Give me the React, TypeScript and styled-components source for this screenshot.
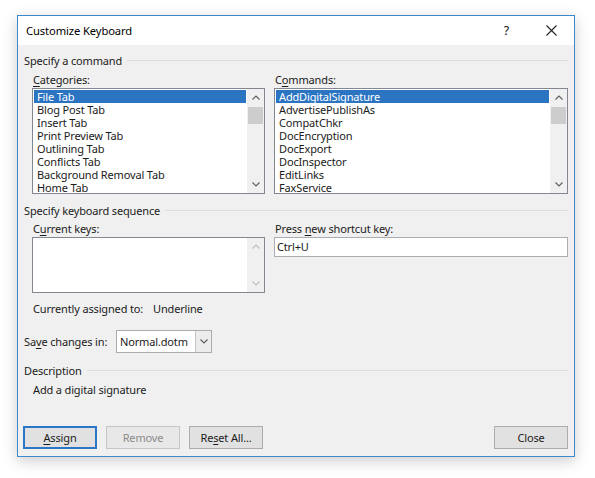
import React from "react";
import styled, { createGlobalStyle } from "styled-components";

const FONT = `"Noto Sans", "Open Sans", sans-serif`;

const Global = createGlobalStyle`
  html, body { margin: 0; padding: 0; background: #ffffff; }
  body { font-family: ${FONT}; font-size: 11px; letter-spacing: -0.15px; color: #1b1b1b; }
  * { box-sizing: border-box; }
`;

const Stage = styled.div`
  padding: 15px 0 0 17px;
  width: 595px;
  height: 478px;
`;

const Window = styled.div`
  width: 558px;
  height: 442px;
  border: 1px solid #3e88cc;
  background: #f0f0f0;
  display: flex;
  flex-direction: column;
  box-shadow: 0 4px 14px rgba(0, 0, 0, 0.2);
`;

const TitleBar = styled.div`
  height: 29px;
  background: #ffffff;
  display: flex;
  align-items: center;
  padding-left: 8px;
`;

const Title = styled.div`
  flex: 1;
  font-size: 11.2px;
  letter-spacing: -0.1px;
  color: #000;
  padding-bottom: 1px;
`;

const TitleButton = styled.div`
  width: 45px;
  height: 29px;
  display: flex;
  align-items: center;
  justify-content: center;
  font-size: 12.5px;
  color: #111;
`;

const Content = styled.div`
  flex: 1;
  display: flex;
  flex-direction: column;
  padding: 0 6px 7px 6px;
`;

const SectionHeader = styled.div<{ $top: number }>`
  display: flex;
  align-items: center;
  gap: 5px;
  height: 16px;
  margin-top: ${(p) => p.$top}px;
  &::after {
    content: "";
    flex: 1;
    height: 1px;
    background: #dcdcdc;
  }
`;

const TwoCols = styled.div<{ $top: number }>`
  display: grid;
  grid-template-columns: 233px 1fr;
  column-gap: 9px;
  margin: ${(p) => p.$top}px 0 0 8px;
`;

const Column = styled.div`
  display: flex;
  flex-direction: column;
`;

const Label = styled.div`
  height: 16px;
  line-height: 16px;
  padding-left: 1px;
`;

const U = styled.span`
  text-decoration: underline;
  text-underline-offset: 2px;
`;

const ListBox = styled.div<{ $h: number }>`
  height: ${(p) => p.$h}px;
  border: 1px solid #828790;
  background: #fff;
  display: flex;
  padding: 1px 0 0 1px;
`;

const Rows = styled.div`
  flex: 1;
  padding-right: 1px;
`;

const Row = styled.div<{ $sel?: boolean }>`
  height: 13px;
  line-height: 13px;
  padding-left: 3px;
  white-space: nowrap;
  background: ${(p) => (p.$sel ? "#2b74c2" : "transparent")};
  color: ${(p) => (p.$sel ? "#ffffff" : "#1b1b1b")};
`;

const ScrollBar = styled.div`
  width: 17px;
  margin-top: -1px;
  display: flex;
  flex-direction: column;
  background: #f0f0f0;
`;

const ScrollArrow = styled.div`
  height: 17px;
  display: flex;
  align-items: center;
  justify-content: center;
`;

const Track = styled.div`
  flex: 1;
  padding: 1px 1px;
`;

const Thumb = styled.div`
  height: 17px;
  background: #cdcdcd;
`;

const TextInput = styled.div`
  height: 20px;
  border: 1px solid #abadb3;
  background: #fff;
  line-height: 18px;
  padding-left: 2px;
`;

const AssignedRow = styled.div`
  display: flex;
  height: 16px;
  line-height: 16px;
  margin: 8px 0 0 9px;
`;

const AssignedLabel = styled.span`
  width: 120px;
`;

const SaveRow = styled.div`
  display: flex;
  align-items: center;
  margin-top: 13px;
  height: 23px;
`;

const SaveLabel = styled.div`
  width: 92px;
`;

const Combo = styled.div`
  width: 96px;
  height: 23px;
  border: 1px solid #acacac;
  background: #fff;
  display: flex;
`;

const ComboText = styled.div`
  flex: 1;
  line-height: 21px;
  padding-left: 3px;
`;

const ComboButton = styled.div`
  width: 16px;
  border-left: 1px solid #c4c4c4;
  background: #ececec;
  display: flex;
  align-items: center;
  justify-content: center;
`;

const DescText = styled.div`
  height: 16px;
  line-height: 16px;
  margin: 4px 0 0 9px;
`;

const ButtonRow = styled.div`
  margin-top: auto;
  display: flex;
  gap: 9px;
  margin-left: -1px;
`;

const Button = styled.div<{ $variant?: "default" | "disabled" }>`
  width: 74px;
  height: 23px;
  display: flex;
  align-items: center;
  justify-content: center;
  background: ${(p) => (p.$variant === "disabled" ? "#e8e8e8" : "#e1e1e1")};
  border: ${(p) =>
    p.$variant === "default"
      ? "2px solid #2b78c8"
      : p.$variant === "disabled"
      ? "1px solid #c6c6c6"
      : "1px solid #adadad"};
  color: ${(p) => (p.$variant === "disabled" ? "#8b8b8b" : "#1b1b1b")};
`;

const Spacer = styled.div`
  flex: 1;
`;

const Chevron = ({ dir, color = "#606060" }: { dir: "up" | "down"; color?: string }) => (
  <svg width="8" height="5" viewBox="0 0 8 5">
    <polyline
      points={dir === "up" ? "0.5,4.5 4,1 7.5,4.5" : "0.5,0.5 4,4 7.5,0.5"}
      fill="none"
      stroke={color}
      strokeWidth="1.2"
    />
  </svg>
);

const Scroll = ({ thumb, disabled }: { thumb?: boolean; disabled?: boolean }) => (
  <ScrollBar>
    <ScrollArrow>
      <Chevron dir="up" color={disabled ? "#c0c0c0" : "#606060"} />
    </ScrollArrow>
    <Track>{thumb && <Thumb />}</Track>
    <ScrollArrow>
      <Chevron dir="down" color={disabled ? "#c0c0c0" : "#606060"} />
    </ScrollArrow>
  </ScrollBar>
);

const categories = [
  "File Tab",
  "Blog Post Tab",
  "Insert Tab",
  "Print Preview Tab",
  "Outlining Tab",
  "Conflicts Tab",
  "Background Removal Tab",
  "Home Tab",
];

const commands = [
  "AddDigitalSignature",
  "AdvertisePublishAs",
  "CompatChkr",
  "DocEncryption",
  "DocExport",
  "DocInspector",
  "EditLinks",
  "FaxService",
];

export default function App() {
  return (
    <Stage>
      <Global />
      <Window>
        <TitleBar>
          <Title>Customize Keyboard</Title>
          <TitleButton>?</TitleButton>
          <TitleButton>
            <svg width="11" height="11" viewBox="0 0 11 11">
              <path d="M0.5 0.5 L10.5 10.5 M10.5 0.5 L0.5 10.5" stroke="#222" strokeWidth="1.1" />
            </svg>
          </TitleButton>
        </TitleBar>
        <Content>
          <SectionHeader $top={7}>Specify a command</SectionHeader>
          <TwoCols $top={4}>
            <Column>
              <Label>
                <U>C</U>ategories:
              </Label>
              <ListBox $h={106}>
                <Rows>
                  {categories.map((c, i) => (
                    <Row key={c} $sel={i === 0}>
                      {c}
                    </Row>
                  ))}
                </Rows>
                <Scroll thumb />
              </ListBox>
            </Column>
            <Column>
              <Label>
                C<U>o</U>mmands:
              </Label>
              <ListBox $h={106}>
                <Rows>
                  {commands.map((c, i) => (
                    <Row key={c} $sel={i === 0}>
                      {c}
                    </Row>
                  ))}
                </Rows>
                <Scroll thumb />
              </ListBox>
            </Column>
          </TwoCols>
          <SectionHeader $top={8}>Specify keyboard sequence</SectionHeader>
          <TwoCols $top={3}>
            <Column>
              <Label>
                C<U>u</U>rrent keys:
              </Label>
              <ListBox $h={56}>
                <Rows />
                <Scroll disabled />
              </ListBox>
            </Column>
            <Column>
              <Label>
                Press <U>n</U>ew shortcut key:
              </Label>
              <TextInput>Ctrl+U</TextInput>
            </Column>
          </TwoCols>
          <AssignedRow>
            <AssignedLabel>Currently assigned to:</AssignedLabel>
            <span>Underline</span>
          </AssignedRow>
          <SaveRow>
            <SaveLabel>
              Sa<U>v</U>e changes in:
            </SaveLabel>
            <Combo>
              <ComboText>Normal.dotm</ComboText>
              <ComboButton>
                <Chevron dir="down" />
              </ComboButton>
            </Combo>
          </SaveRow>
          <SectionHeader $top={9}>Description</SectionHeader>
          <DescText>Add a digital signature</DescText>
          <ButtonRow>
            <Button $variant="default">
              <span>
                <U>A</U>ssign
              </span>
            </Button>
            <Button $variant="disabled">Remove</Button>
            <Button>
              <span>
                Re<U>s</U>et All...
              </span>
            </Button>
            <Spacer />
            <Button>Close</Button>
          </ButtonRow>
        </Content>
      </Window>
    </Stage>
  );
}
